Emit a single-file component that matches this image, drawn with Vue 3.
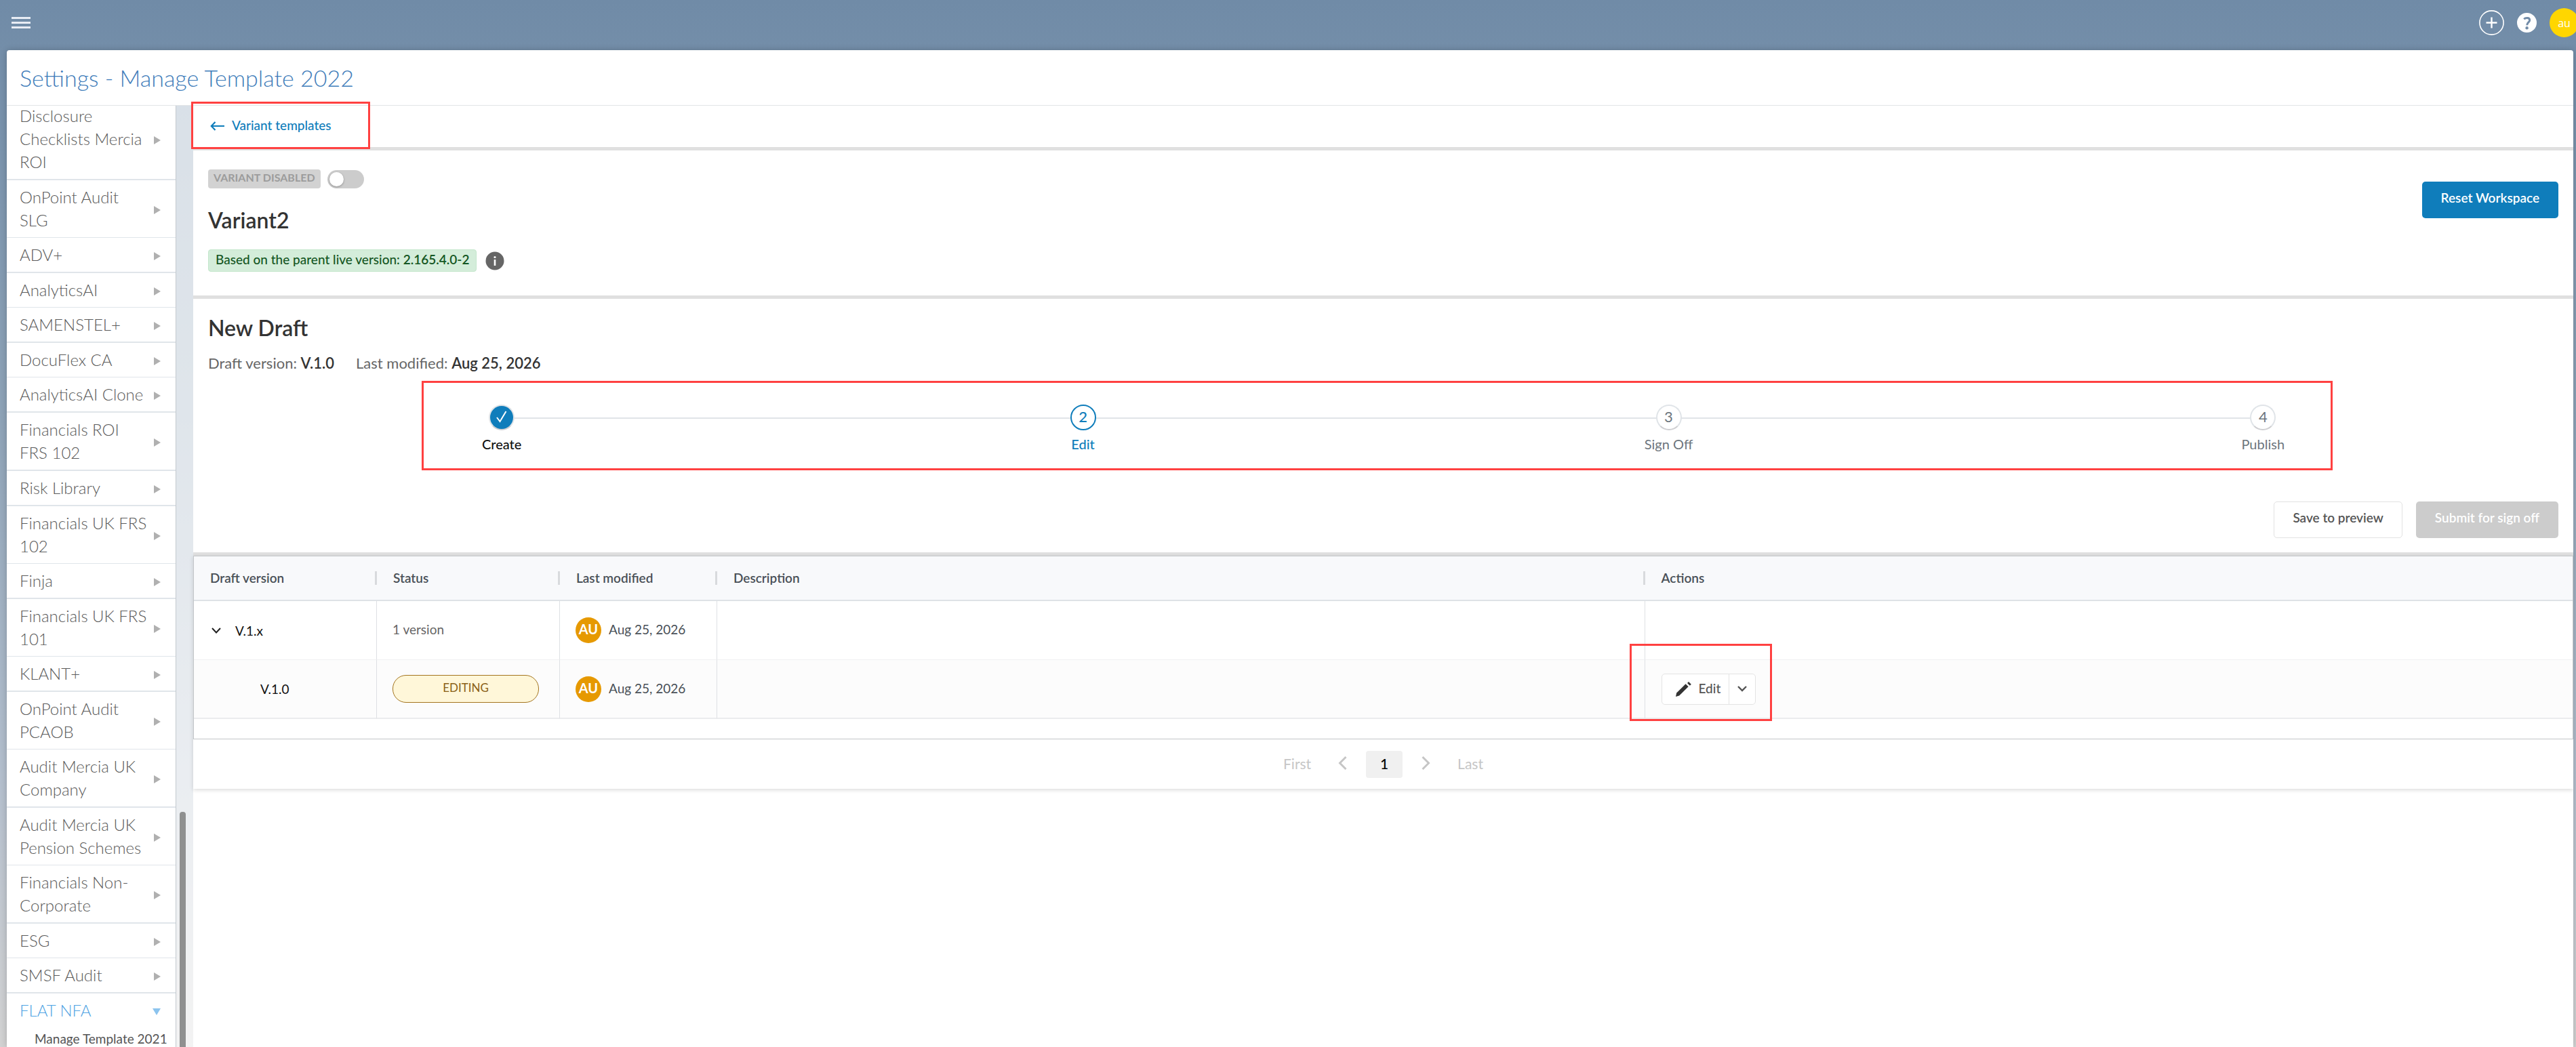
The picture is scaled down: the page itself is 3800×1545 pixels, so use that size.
<template>
    <div class="app">
        <header class="topbar">
            <button class="icon-btn menu-btn" type="button" aria-label="Menu">
                <svg width="28" height="18" viewBox="0 0 28 18">
                    <path d="M0 1.5h28M0 8.5h28M0 15.5h28" stroke="#e8ecf4" stroke-width="3" />
                </svg>
            </button>
            <div class="topbar-actions">
                <button class="icon-btn" type="button" aria-label="Add">
                    <svg width="37" height="37" viewBox="0 0 37 37" fill="none" stroke="#fff">
                        <circle cx="18.5" cy="18.5" r="17.6" stroke-width="1.6" />
                        <path d="M18.5 10.5v16M10.5 18.5h16" stroke-width="2.4" />
                    </svg>
                </button>
                <button class="icon-btn" type="button" aria-label="Help">
                    <svg width="29" height="29" viewBox="0 0 29 29">
                        <circle cx="14.5" cy="14.5" r="14.5" fill="#fff" />
                        <path d="M10.3 9.3C12 7.2 18.7 6.3 18.7 10.8C18.7 14 14.7 14 14.7 18.3" fill="none"
                            stroke="#728ca8" stroke-width="3" />
                        <circle cx="14.6" cy="22.3" r="2.2" fill="#728ca8" />
                    </svg>
                </button>
                <button class="icon-btn user-avatar" type="button">au</button>
            </div>
        </header>

        <div class="panel">
            <h1 class="panel-title">Settings - Manage Template 2022</h1>
            <div class="panel-body">
                <nav class="sidebar">
                    <ul class="nav-list">
                        <li v-for="item in navItems" :key="item.label" class="nav-item"
                            :class="{ active: item.children }">
                            <a href="#" class="nav-link">
                                <span class="nav-label">{{ item.label }}</span>
                                <span class="nav-arrow"></span>
                            </a>
                            <a v-for="child in item.children" :key="child" href="#" class="nav-child">{{ child }}</a>
                        </li>
                    </ul>
                </nav>
                <div class="gutter">
                    <div class="scroll-thumb"></div>
                </div>

                <main class="content">
                    <div class="back-bar">
                        <a href="#" class="back-link">
                            <svg width="21" height="14" viewBox="0 0 21 14" fill="none" stroke="#0f7dbb"
                                stroke-width="2.2">
                                <path d="M1.5 7H21M7.5 1L1.8 7L7.5 13" />
                            </svg>
                            <span class="raised">Variant templates</span>
                        </a>
                        <div class="marker marker-back"></div>
                    </div>

                    <section class="variant">
                        <div>
                            <div class="variant-state">
                                <label for="variant-toggle" class="state-badge">VARIANT DISABLED</label>
                                <input id="variant-toggle" v-model="variantEnabled" type="checkbox" class="toggle" />
                            </div>
                            <h2 class="variant-name">Variant2</h2>
                            <div class="variant-parent">
                                <span class="parent-badge">Based on the parent live version: <b>2.165.4.0-2</b></span>
                                <svg width="28" height="28" viewBox="0 0 28 28">
                                    <circle cx="14" cy="14" r="13.5" fill="#666" />
                                    <path d="M14 12v9" stroke="#fff" stroke-width="2.6" />
                                    <circle cx="14" cy="8.5" r="1.6" fill="#fff" />
                                </svg>
                            </div>
                        </div>
                        <button class="btn btn-primary" type="button">Reset Workspace</button>
                    </section>

                    <section class="draft">
                        <h2 class="draft-title">New Draft</h2>
                        <p class="draft-meta">
                            <span>Draft version: <b>V.1.0</b></span>
                            <span>Last modified: <b>Aug 25, 2026</b></span>
                        </p>
                        <div class="stepper-wrap">
                            <ol class="stepper">
                                <li v-for="(step, index) in steps" :key="step.label" class="step" :class="step.state">
                                    <span class="step-circle">
                                        <svg v-if="step.state === 'done'" width="16" height="18" viewBox="0 0 16 18"
                                            fill="none" stroke="#fff" stroke-width="2">
                                            <path d="M1 10L5.5 16L14.5 1" />
                                        </svg>
                                        <template v-else>{{ index + 1 }}</template>
                                    </span>
                                    <span class="step-label">{{ step.label }}</span>
                                </li>
                            </ol>
                            <div class="marker marker-stepper"></div>
                        </div>
                        <div class="draft-actions">
                            <button class="btn btn-outline" type="button">Save to preview</button>
                            <button class="btn btn-disabled" type="button" disabled>Submit for sign off</button>
                        </div>
                    </section>

                    <section class="versions">
                        <div class="table-wrap">
                            <table class="table">
                                <colgroup>
                                    <col class="col-version" />
                                    <col class="col-status" />
                                    <col class="col-modified" />
                                    <col />
                                    <col />
                                </colgroup>
                                <thead>
                                    <tr>
                                        <th v-for="header in headers" :key="header">
                                            <span class="th-label">{{ header }}</span>
                                        </th>
                                    </tr>
                                </thead>
                                <tbody>
                                    <tr v-for="row in rows" :key="row.version" :class="{ child: !row.group }">
                                        <td>
                                            <div class="cell cell-version">
                                                <button v-if="row.group" class="icon-btn" type="button"
                                                    aria-label="Collapse">
                                                    <svg width="14" height="9" viewBox="0 0 14 9" fill="none"
                                                        stroke="#222" stroke-width="2">
                                                        <path d="M1 1L7 7.5L13 1" />
                                                    </svg>
                                                </button>
                                                {{ row.version }}
                                            </div>
                                        </td>
                                        <td>
                                            <div class="cell">
                                                <span v-if="row.group" class="raised">{{ row.status }}</span>
                                                <span v-else class="status-pill">{{ row.status }}</span>
                                            </div>
                                        </td>
                                        <td>
                                            <div class="cell cell-modified">
                                                <span class="avatar">AU</span>
                                                <span class="raised">{{ row.modified }}</span>
                                            </div>
                                        </td>
                                        <td></td>
                                        <td class="cell-actions">
                                            <template v-if="!row.group">
                                                <div class="split-btn">
                                                    <button class="split-main" type="button">
                                                        <svg width="23" height="22" viewBox="0 0 23 22" fill="#333">
                                                            <path d="M1.2 16.6L14.6 3.2L18.6 7.2L5.2 20.6L0 22Z" />
                                                            <path d="M17 2L19 0L22.8 3.8L20.8 5.8Z" />
                                                        </svg>
                                                        <span class="raised">Edit</span>
                                                    </button>
                                                    <button class="split-more" type="button" aria-label="More">
                                                        <svg width="14" height="9" viewBox="0 0 14 9" fill="none"
                                                            stroke="#555" stroke-width="2.4">
                                                            <path d="M1 1L7 7L13 1" />
                                                        </svg>
                                                    </button>
                                                </div>
                                                <div class="marker marker-edit"></div>
                                            </template>
                                        </td>
                                    </tr>
                                </tbody>
                            </table>
                        </div>
                        <div class="pagination">
                            <button class="page-btn page-edge" type="button" disabled>First</button>
                            <button class="page-btn" type="button" aria-label="Previous" disabled>
                                <svg width="13" height="20" viewBox="0 0 13 20" fill="none" stroke="#c6c6c6"
                                    stroke-width="3">
                                    <path d="M11.5 1L2.5 10L11.5 19" />
                                </svg>
                            </button>
                            <button class="page-btn current" type="button">{{ currentPage }}</button>
                            <button class="page-btn" type="button" aria-label="Next" disabled>
                                <svg width="13" height="20" viewBox="0 0 13 20" fill="none" stroke="#c6c6c6"
                                    stroke-width="3">
                                    <path d="M1.5 1L10.5 10L1.5 19" />
                                </svg>
                            </button>
                            <button class="page-btn page-edge" type="button" disabled>Last</button>
                        </div>
                    </section>
                </main>
            </div>
        </div>
    </div>
</template>

<script setup>
import { ref } from "vue";

const variantEnabled = ref(false);
const currentPage = ref(1);

const navItems = [
    { label: "Disclosure Checklists Mercia ROI" },
    { label: "OnPoint Audit SLG" },
    { label: "ADV+" },
    { label: "AnalyticsAI" },
    { label: "SAMENSTEL+" },
    { label: "DocuFlex CA" },
    { label: "AnalyticsAI Clone" },
    { label: "Financials ROI FRS 102" },
    { label: "Risk Library" },
    { label: "Financials UK FRS 102" },
    { label: "Finja" },
    { label: "Financials UK FRS 101" },
    { label: "KLANT+" },
    { label: "OnPoint Audit PCAOB" },
    { label: "Audit Mercia UK Company" },
    { label: "Audit Mercia UK Pension Schemes" },
    { label: "Financials Non-Corporate" },
    { label: "ESG" },
    { label: "SMSF Audit" },
    { label: "FLAT NFA", children: ["Manage Template 2021"] },
];

const steps = [
    { label: "Create", state: "done" },
    { label: "Edit", state: "current" },
    { label: "Sign Off", state: "todo" },
    { label: "Publish", state: "todo" },
];

const headers = ["Draft version", "Status", "Last modified", "Description", "Actions"];

const rows = [
    { group: true, version: "V.1.x", status: "1 version", modified: "Aug 25, 2026" },
    { group: false, version: "V.1.0", status: "EDITING", modified: "Aug 25, 2026" },
];
</script>

<style>
body {
    margin: 0;
}
</style>

<style scoped>
* {
    box-sizing: border-box;
}

.app {
    display: flex;
    flex-direction: column;
    height: 100vh;
    overflow: hidden;
    background: linear-gradient(180deg, #708ba7 0%, #8ea3b7 40%, #b4bfcd 75%, #d2d2d2 100%);
    font-family: Lato, "Liberation Sans", sans-serif;
    font-size: 19px;
    color: #333;
}

button {
    font-family: inherit;
    cursor: pointer;
}

svg {
    display: block;
    flex: none;
}

.icon-btn {
    padding: 0;
    border: 0;
    background: none;
}

/* labels sit slightly above the middle of their row */
.raised {
    padding-bottom: 3px;
}

/* top bar */
.topbar {
    display: flex;
    align-items: center;
    justify-content: space-between;
    flex: none;
    height: 74px;
    padding: 0 0 7px 17px;
}

.topbar-actions {
    display: flex;
    align-items: center;
    gap: 19px;
    margin-right: -4px;
}

.user-avatar {
    width: 43px;
    height: 43px;
    border-radius: 50%;
    background: #ffd600;
    color: #fff;
    font-family: "Open Sans", sans-serif;
    font-size: 16px;
}

/* panel */
.panel {
    display: flex;
    flex-direction: column;
    flex: 1;
    min-height: 0;
    margin: 0 4px 0 10px;
    border-radius: 4px 4px 0 0;
    box-shadow: 0 0 10px rgba(0, 0, 0, 0.2);
    overflow: hidden;
}

.panel-title {
    flex: none;
    margin: 0;
    padding: 20px 19px;
    border-bottom: 1px solid #e2e5e7;
    background: #fff;
    color: #3f7dba;
    font-size: 34px;
    font-weight: 300;
    line-height: 41px;
}

.panel-body {
    display: flex;
    flex: 1;
    min-height: 0;
}

.sidebar {
    flex: none;
    width: 250px;
    overflow: hidden;
    border-right: 1px solid #c3c9ce;
    background: #fff;
}

.nav-list {
    margin: -10px 0 0;
    padding: 0;
    list-style: none;
}

.nav-item {
    border-bottom: 1px solid #e0e5ea;
}

.nav-item:nth-child(odd),
.nav-item:nth-child(8) {
    border-bottom-width: 2px;
}

.nav-link {
    display: flex;
    align-items: center;
    justify-content: space-between;
    padding: 8px 22px 8px 19px;
    color: #5a5a5a;
    font-size: 24px;
    font-weight: 300;
    line-height: 34px;
    text-decoration: none;
}

.nav-label {
    width: 188px;
}

.nav-arrow {
    margin-top: 4px;
    border: solid transparent;
    border-width: 6px 0 6px 10px;
    border-left-color: #b0b0b0;
}

.nav-item.active .nav-link {
    color: #4fa3e3;
}

.nav-item.active .nav-arrow {
    border-color: #8cc4ee transparent transparent;
    border-width: 10px 6px 0;
}

.nav-child {
    display: block;
    padding-left: 41px;
    color: #555;
    font-size: 19px;
    line-height: 34px;
    text-decoration: none;
    white-space: nowrap;
}

.gutter {
    display: flex;
    align-items: flex-end;
    flex: none;
    width: 25px;
    padding-left: 5px;
    background: rgba(255, 255, 255, 0.72);
}

.scroll-thumb {
    width: 9px;
    height: 25%;
    border-radius: 4px 4px 0 0;
    background: #8f9090;
}

.content {
    flex: 1;
    min-width: 0;
    background: #fff;
}

/* red highlight frames */
.marker {
    position: absolute;
    border: 3px solid #ff4141;
    pointer-events: none;
}

.marker-back {
    top: -6px;
    left: -3px;
    width: 264px;
    height: 70px;
}

.marker-stepper {
    top: -35px;
    right: -71px;
    bottom: -27px;
    left: -89px;
}

.marker-edit {
    top: -24px;
    left: -23px;
    width: 210px;
    height: 114px;
}

/* back bar */
.back-bar {
    position: relative;
    z-index: 1;
    display: flex;
    align-items: center;
    height: 66px;
    padding: 0 25px 2px;
    border-bottom: 5px solid #e0e0e0;
}

.back-link {
    display: flex;
    align-items: center;
    gap: 11px;
    color: #0f7dbb;
    font-weight: 500;
    text-decoration: none;
}

/* variant summary */
.variant {
    display: flex;
    align-items: flex-start;
    justify-content: space-between;
    padding: 28px 22px 35px;
    border-bottom: 5px solid #e0e0e0;
}

.variant > .btn {
    margin-top: 18px;
}

.variant-state {
    display: flex;
    align-items: center;
    gap: 10px;
}

.state-badge {
    padding: 3px 8px 7px;
    border-radius: 4px;
    background: #d2d2d2;
    color: #9c9c9c;
    font-size: 16px;
    font-weight: 700;
    line-height: 18px;
}

.toggle {
    display: flex;
    align-items: center;
    width: 54px;
    height: 27px;
    margin: 0;
    padding: 3px;
    border-radius: 14px;
    background: #ccc;
    appearance: none;
    cursor: pointer;
}

.toggle::before {
    content: "";
    width: 21px;
    height: 21px;
    border-radius: 50%;
    background: #fff;
    box-shadow: 0 1px 3px rgba(0, 0, 0, 0.3);
}

.toggle:checked {
    justify-content: flex-end;
    background: #0f7dbb;
}

.variant-name {
    margin: 27px 0 23px;
    font-size: 32px;
    font-weight: 600;
    line-height: 40px;
}

.variant-parent {
    display: flex;
    align-items: center;
    gap: 13px;
}

.parent-badge {
    padding: 3px 10px 6px;
    border: 1px solid #c3e6cb;
    border-radius: 4px;
    background: #d4edda;
    color: #155724;
    font-weight: 500;
    line-height: 22px;
}

.parent-badge b {
    font-weight: 600;
}

.btn {
    padding: 13px 27px 19px;
    border: 1px solid transparent;
    border-radius: 5px;
    font-size: 19px;
    font-weight: 600;
    line-height: 20px;
    white-space: nowrap;
}

.btn-primary {
    background: #0f7dbb;
    color: #fff;
}

.btn-outline {
    border-color: #e2e2e2;
    background: #fff;
    color: #555;
}

.btn-disabled {
    background: #ccc;
    color: #fff;
}

/* draft */
.draft {
    padding: 23px 22px 21px;
    border-bottom: 5px solid #e0e0e0;
}

.draft-title {
    margin: 0;
    font-size: 32px;
    font-weight: 600;
    line-height: 40px;
}

.draft-meta {
    display: flex;
    gap: 32px;
    margin: 19px 0 0;
    color: #666;
    font-size: 22px;
    line-height: 26px;
}

.draft-meta b {
    color: #333;
    font-weight: 600;
}

.stepper-wrap {
    position: relative;
    width: 76.7%;
    margin: 48px auto 73px;
}

.stepper {
    position: relative;
    display: flex;
    justify-content: space-between;
    margin: 0;
    padding: 0;
    list-style: none;
}

.stepper::before {
    content: "";
    position: absolute;
    top: 19px;
    right: 30px;
    left: 30px;
    height: 2px;
    background: #e0e4e8;
}

.step {
    position: relative;
    display: flex;
    flex-direction: column;
    align-items: center;
    gap: 8px;
    color: #6c757d;
}

.step-circle {
    display: flex;
    align-items: center;
    justify-content: center;
    width: 38px;
    height: 38px;
    padding-bottom: 3px;
    border: 2px solid #e0e4e8;
    border-bottom-color: #cfcfd2;
    border-radius: 50%;
    background: #fff;
    font-size: 22px;
}

.step-label {
    font-size: 20px;
    line-height: 24px;
}

.step.done .step-circle {
    background: #0f7dbb;
}

.step.done .step-label {
    color: #111;
    font-weight: 500;
}

.step.current {
    color: #0f7dbb;
    font-weight: 500;
}

.step.current .step-circle {
    border-color: #0f7dbb;
}

.draft-actions {
    display: flex;
    justify-content: flex-end;
    gap: 20px;
}

/* versions table */
.versions {
    box-shadow: 0 2px 6px rgba(0, 0, 0, 0.14);
}

.table-wrap {
    padding-bottom: 29px;
    border: 1px solid #c3c6c9;
}

.table {
    width: 100%;
    border-spacing: 0;
    table-layout: fixed;
}

.col-version,
.col-status {
    width: 270px;
}

.col-modified {
    width: 232px;
}

.table th {
    height: 66px;
    padding: 0 0 0 24px;
    border-bottom: 2px solid #dee2e6;
    background: #f8f9fb;
    color: #495057;
    font-weight: 600;
    text-align: left;
}

.th-label {
    display: block;
    border-right: 3px solid #d8dadd;
    line-height: 20px;
}

.table th:last-child .th-label {
    border-right: 0;
}

.table td {
    height: 87px;
    padding: 0 23px;
    border-right: 1px solid #dee0e4;
    border-bottom: 1px solid #f0f1f2;
}

.table td:last-child {
    border-right: 0;
}

.table .child td {
    border-bottom: 2px solid #ebecee;
    background: #fcfcfc;
}

.cell {
    display: flex;
    align-items: center;
    color: #666;
}

.cell-version {
    gap: 21px;
    padding-left: 3px;
    color: #111;
}

.child .cell-version {
    padding-left: 75px;
}

.cell-modified {
    gap: 11px;
    color: #495057;
}

.status-pill {
    width: 216px;
    padding: 8px 0 11px;
    border: 1px solid #a3741e;
    border-radius: 20px;
    background: #fff7d9;
    color: #8a6116;
    font-size: 17px;
    line-height: 20px;
    text-align: center;
}

.avatar {
    width: 38px;
    height: 38px;
    border-radius: 50%;
    background: #e69900;
    color: #fff;
    font-size: 20px;
    font-weight: 700;
    line-height: 34px;
    text-align: center;
}

.table .cell-actions {
    position: relative;
    padding-left: 24px;
}

.split-btn {
    display: inline-flex;
    height: 46px;
    border: 1px solid #e4e4e4;
    border-radius: 5px;
    background: #fff;
    vertical-align: middle;
}

.split-main,
.split-more {
    display: flex;
    align-items: center;
    padding: 0 12px;
    border: 0;
    background: none;
    color: #555;
    font-size: 19px;
    font-weight: 500;
}

.split-main {
    gap: 11px;
    padding-left: 20px;
    border-right: 1px solid #e4e4e4;
}

/* pagination */
.pagination {
    display: flex;
    align-items: center;
    justify-content: center;
    gap: 28px;
    height: 73px;
}

.page-btn {
    padding: 0 0 3px;
    border: 0;
    background: none;
    color: #c6c6c6;
    font-size: 21px;
    line-height: 37px;
}

.page-edge {
    margin: 0 12px;
}

.page-btn.current {
    width: 54px;
    border-radius: 4px;
    background: #f0f0f0;
    color: #000;
    font-weight: 500;
}
</style>
